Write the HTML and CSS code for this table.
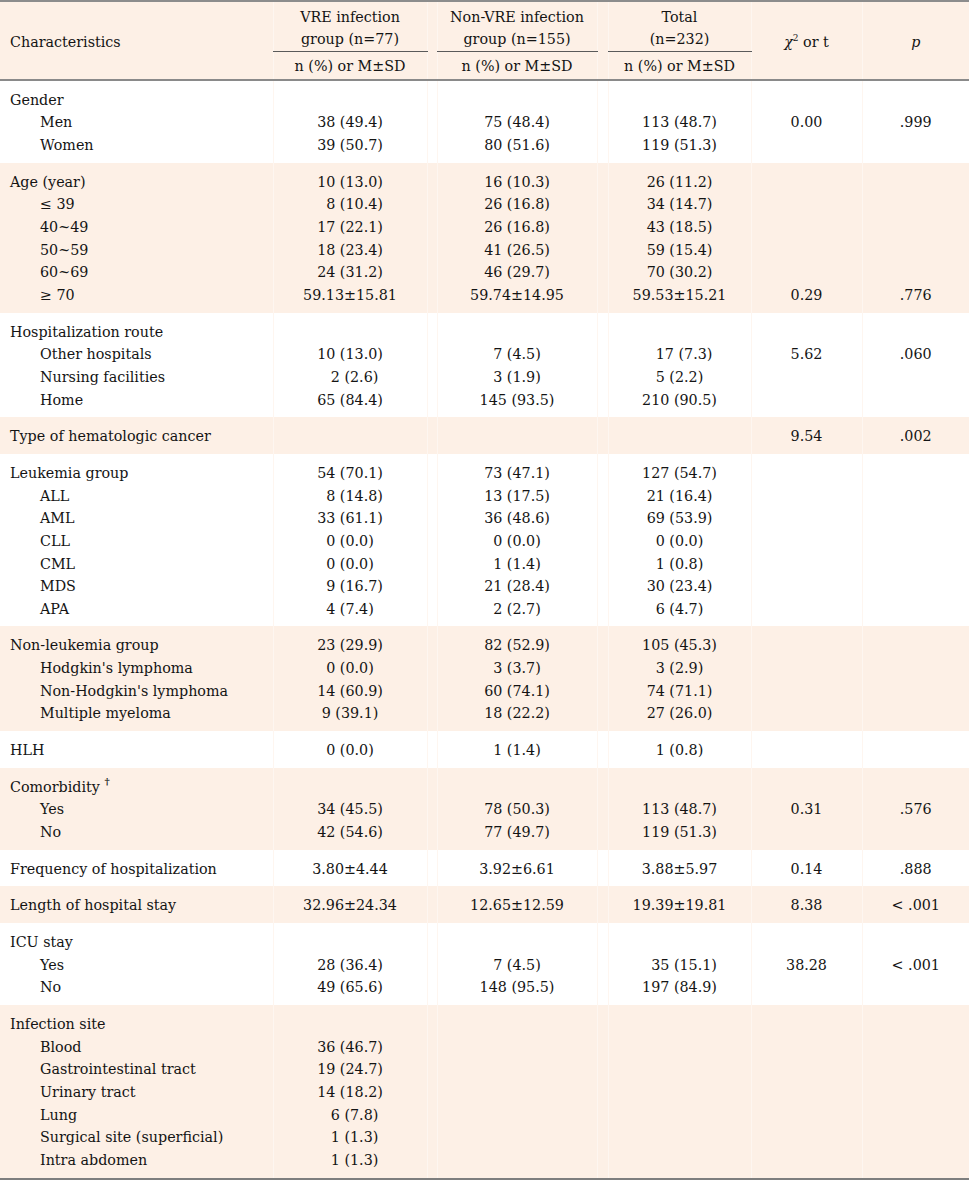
FILE: index.html
```html
<!DOCTYPE html>
<html lang="en">
<head>
<meta charset="utf-8">
<title>VRE infection table</title>
<link rel="stylesheet" href="styles.css">
</head>
<body>
<table class="tbl">
  <colgroup>
    <col class="c-label">
    <col class="c-vre">
    <col class="c-gap1">
    <col class="c-non">
    <col class="c-gap2">
    <col class="c-tot">
    <col class="c-chi">
    <col class="c-p">
  </colgroup>
  <thead>
    <tr class="h1">
      <th class="lab" rowspan="2">Characteristics</th>
      <th class="grp">VRE infection<br>group (n=77)</th>
      <th class="gap" rowspan="2"></th>
      <th class="grp">Non-VRE infection<br>group (n=155)</th>
      <th class="gap" rowspan="2"></th>
      <th class="grp">Total<br>(n=232)</th>
      <th class="stat" rowspan="2"><i class="chi">χ</i><sup>2</sup> or t</th>
      <th class="stat" rowspan="2"><i>p</i></th>
    </tr>
    <tr class="h2">
      <th class="sub">n (%) or M±SD</th>
      <th class="sub">n (%) or M±SD</th>
      <th class="sub">n (%) or M±SD</th>
    </tr>
  </thead>

  <tbody class="w">
    <tr><td class="lab">Gender</td><td></td><td></td><td></td><td></td><td></td><td></td><td></td></tr>
    <tr><td class="lab in">Men</td><td>38 (49.4)</td><td></td><td>75 (48.4)</td><td></td><td>113 (48.7)</td><td>0.00</td><td>.999</td></tr>
    <tr><td class="lab in">Women</td><td>39 (50.7)</td><td></td><td>80 (51.6)</td><td></td><td>119 (51.3)</td><td></td><td></td></tr>
  </tbody>

  <tbody class="pe">
    <tr><td class="lab">Age (year)</td><td>10 (13.0)</td><td></td><td>16 (10.3)</td><td></td><td>26 (11.2)</td><td></td><td></td></tr>
    <tr><td class="lab in">≤ 39</td><td>&#8199;8 (10.4)</td><td></td><td>26 (16.8)</td><td></td><td>34 (14.7)</td><td></td><td></td></tr>
    <tr><td class="lab in">40~49</td><td>17 (22.1)</td><td></td><td>26 (16.8)</td><td></td><td>43 (18.5)</td><td></td><td></td></tr>
    <tr><td class="lab in">50~59</td><td>18 (23.4)</td><td></td><td>41 (26.5)</td><td></td><td>59 (15.4)</td><td></td><td></td></tr>
    <tr><td class="lab in">60~69</td><td>24 (31.2)</td><td></td><td>46 (29.7)</td><td></td><td>70 (30.2)</td><td></td><td></td></tr>
    <tr><td class="lab in">≥ 70</td><td>59.13±15.81</td><td></td><td>59.74±14.95</td><td></td><td>59.53±15.21</td><td>0.29</td><td>.776</td></tr>
  </tbody>

  <tbody class="w">
    <tr><td class="lab">Hospitalization route</td><td></td><td></td><td></td><td></td><td></td><td></td><td></td></tr>
    <tr><td class="lab in">Other hospitals</td><td>10 (13.0)</td><td></td><td>7 (4.5)</td><td></td><td>&#8199;17 (7.3)</td><td>5.62</td><td>.060</td></tr>
    <tr><td class="lab in">Nursing facilities</td><td>&#8199;2 (2.6)</td><td></td><td>3 (1.9)</td><td></td><td>5 (2.2)</td><td></td><td></td></tr>
    <tr><td class="lab in">Home</td><td>65 (84.4)</td><td></td><td>145 (93.5)</td><td></td><td>210 (90.5)</td><td></td><td></td></tr>
  </tbody>

  <tbody class="pe">
    <tr><td class="lab">Type of hematologic cancer</td><td></td><td></td><td></td><td></td><td></td><td>9.54</td><td>.002</td></tr>
  </tbody>

  <tbody class="w">
    <tr><td class="lab">Leukemia group</td><td>54 (70.1)</td><td></td><td>73 (47.1)</td><td></td><td>127 (54.7)</td><td></td><td></td></tr>
    <tr><td class="lab in">ALL</td><td>&#8199;8 (14.8)</td><td></td><td>13 (17.5)</td><td></td><td>21 (16.4)</td><td></td><td></td></tr>
    <tr><td class="lab in">AML</td><td>33 (61.1)</td><td></td><td>36 (48.6)</td><td></td><td>69 (53.9)</td><td></td><td></td></tr>
    <tr><td class="lab in">CLL</td><td>0 (0.0)</td><td></td><td>0 (0.0)</td><td></td><td>0 (0.0)</td><td></td><td></td></tr>
    <tr><td class="lab in">CML</td><td>0 (0.0)</td><td></td><td>1 (1.4)</td><td></td><td>1 (0.8)</td><td></td><td></td></tr>
    <tr><td class="lab in">MDS</td><td>&#8199;9 (16.7)</td><td></td><td>21 (28.4)</td><td></td><td>30 (23.4)</td><td></td><td></td></tr>
    <tr><td class="lab in">APA</td><td>4 (7.4)</td><td></td><td>2 (2.7)</td><td></td><td>6 (4.7)</td><td></td><td></td></tr>
  </tbody>

  <tbody class="pe">
    <tr><td class="lab">Non-leukemia group</td><td>23 (29.9)</td><td></td><td>82 (52.9)</td><td></td><td>105 (45.3)</td><td></td><td></td></tr>
    <tr><td class="lab in">Hodgkin's lymphoma</td><td>0 (0.0)</td><td></td><td>3 (3.7)</td><td></td><td>3 (2.9)</td><td></td><td></td></tr>
    <tr><td class="lab in">Non-Hodgkin's lymphoma</td><td>14 (60.9)</td><td></td><td>60 (74.1)</td><td></td><td>74 (71.1)</td><td></td><td></td></tr>
    <tr><td class="lab in">Multiple myeloma</td><td>9 (39.1)</td><td></td><td>18 (22.2)</td><td></td><td>27 (26.0)</td><td></td><td></td></tr>
  </tbody>

  <tbody class="w">
    <tr><td class="lab">HLH</td><td>0 (0.0)</td><td></td><td>1 (1.4)</td><td></td><td>1 (0.8)</td><td></td><td></td></tr>
  </tbody>

  <tbody class="pe">
    <tr><td class="lab">Comorbidity <sup class="dag">†</sup></td><td></td><td></td><td></td><td></td><td></td><td></td><td></td></tr>
    <tr><td class="lab in">Yes</td><td>34 (45.5)</td><td></td><td>78 (50.3)</td><td></td><td>113 (48.7)</td><td>0.31</td><td>.576</td></tr>
    <tr><td class="lab in">No</td><td>42 (54.6)</td><td></td><td>77 (49.7)</td><td></td><td>119 (51.3)</td><td></td><td></td></tr>
  </tbody>

  <tbody class="w">
    <tr><td class="lab">Frequency of hospitalization</td><td>3.80±4.44</td><td></td><td>3.92±6.61</td><td></td><td>3.88±5.97</td><td>0.14</td><td>.888</td></tr>
  </tbody>

  <tbody class="pe">
    <tr><td class="lab">Length of hospital stay</td><td>32.96±24.34</td><td></td><td>12.65±12.59</td><td></td><td>19.39±19.81</td><td>8.38</td><td>&lt; .001</td></tr>
  </tbody>

  <tbody class="w">
    <tr><td class="lab">ICU stay</td><td></td><td></td><td></td><td></td><td></td><td></td><td></td></tr>
    <tr><td class="lab in">Yes</td><td>28 (36.4)</td><td></td><td>7 (4.5)</td><td></td><td>&#8199;35 (15.1)</td><td>38.28</td><td>&lt; .001</td></tr>
    <tr><td class="lab in">No</td><td>49 (65.6)</td><td></td><td>148 (95.5)</td><td></td><td>197 (84.9)</td><td></td><td></td></tr>
  </tbody>

  <tbody class="pe">
    <tr><td class="lab">Infection site</td><td></td><td></td><td></td><td></td><td></td><td></td><td></td></tr>
    <tr><td class="lab in">Blood</td><td>36 (46.7)</td><td></td><td></td><td></td><td></td><td></td><td></td></tr>
    <tr><td class="lab in">Gastrointestinal tract</td><td>19 (24.7)</td><td></td><td></td><td></td><td></td><td></td><td></td></tr>
    <tr><td class="lab in">Urinary tract</td><td>14 (18.2)</td><td></td><td></td><td></td><td></td><td></td><td></td></tr>
    <tr><td class="lab in">Lung</td><td>&#8199;6 (7.8)</td><td></td><td></td><td></td><td></td><td></td><td></td></tr>
    <tr><td class="lab in">Surgical site (superficial)</td><td>&#8199;1 (1.3)</td><td></td><td></td><td></td><td></td><td></td><td></td></tr>
    <tr><td class="lab in">Intra abdomen</td><td>&#8199;1 (1.3)</td><td></td><td></td><td></td><td></td><td></td><td></td></tr>
  </tbody>
</table>
</body>
</html>
```

FILE: styles.css
```css
html, body {
  margin: 0;
  padding: 0;
  background: #ffffff;
}

.tbl {
  width: 969px;
  table-layout: fixed;
  border-collapse: collapse;
  font-family: "DejaVu Serif", "Liberation Serif", serif;
  font-size: 14.3px;
  color: #141414;
  border-top: 2px solid #8c8c8c;
  border-bottom: 2px solid #7e7e7e;
}

.c-label { width: 273px; }
.c-vre { width: 154px; }
.c-gap1 { width: 10px; }
.c-non { width: 160px; }
.c-gap2 { width: 11px; }
.c-tot { width: 143px; }
.c-chi { width: 111px; }
.c-p { width: 107px; }

thead {
  background: #fdf0e6;
}

thead tr.h2 {
  border-bottom: 2px solid #8a8a8a;
}

th {
  font-weight: normal;
  text-align: center;
  padding: 0;
  line-height: 22px;
  white-space: nowrap;
}

th + th,
td + td {
  border-left: 1px solid #fef6f0;
}

.h2 th {
  border-left: 1px solid #fef6f0;
}

th.lab {
  text-align: left;
  padding-left: 10px;
  padding-top: 3px;
}

th.stat {
  padding-top: 3px;
}

th.grp {
  padding: 4px 0 1px;
  border-bottom: 1px solid #5a5a5a;
}

th.sub {
  padding: 3px 0 1px;
  line-height: 22.7px;
}

.chi {
  font-family: "DejaVu Serif", serif;
}

th sup {
  font-size: 9px;
  line-height: 0;
  vertical-align: 6px;
}

tbody.w {
  background: #ffffff;
}

tbody.pe {
  background: #fdf0e6;
}

td {
  padding: 0;
  line-height: 22.65px;
  text-align: center;
  white-space: nowrap;
  font-variant-numeric: tabular-nums;
}

tbody tr:first-child td {
  padding-top: 8px;
}

tbody tr:last-child td {
  padding-bottom: 6px;
}

td.lab {
  text-align: left;
  padding-left: 10px;
}

td.in {
  padding-left: 40px;
}

.dag {
  font-size: 10px;
  font-weight: bold;
  line-height: 0;
  vertical-align: 7px;
}
```
